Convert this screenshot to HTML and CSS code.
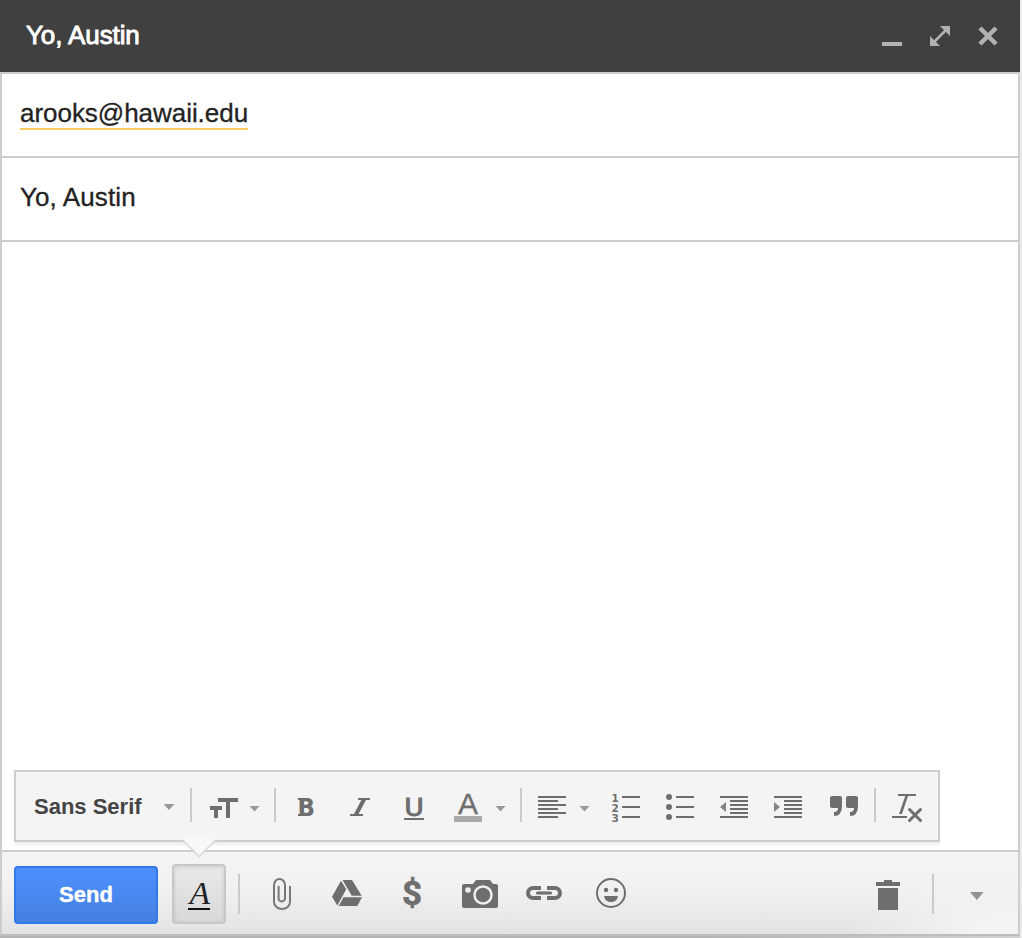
FILE: index.html
```html
<!DOCTYPE html>
<html lang="en">
<head>
<meta charset="utf-8">
<title>Yo, Austin</title>
<link rel="stylesheet" href="styles.css">
</head>
<body>
<main class="compose">
  <header class="titlebar">
    <h1 class="title">Yo, Austin</h1>
    <svg class="window-controls" width="106" height="24" viewBox="882 24 106 24" role="img" aria-label="Window controls">
      <rect x="882" y="42" width="20" height="4"/>
      <path d="M940 26h10v10zM930 36v10h10z"/>
      <path class="shaft" d="M933 43l14-14"/>
      <path class="close" d="M980 28l16 16M996 28l-16 16"/>
    </svg>
  </header>
  <section class="sheet">
    <div class="field"><span class="recipient">arooks@hawaii.edu</span></div>
    <div class="field subject">Yo, Austin</div>
    <div class="message">
      <div class="format-bar">
        <div class="font-picker">
          <span class="font-name">Sans Serif</span>
          <svg class="picker-caret" width="12" height="8" viewBox="0 0 12 8"><path class="light" d="M.5 1h11L6 7z"/></svg>
        </div>
        <i class="divider"></i>
        <svg width="82" height="36" viewBox="192 788 82 36"><rect x="218" y="798" width="20" height="4"/><rect x="226" y="798" width="4" height="20"/><rect x="210" y="806" width="12" height="4"/><rect x="214" y="806" width="4" height="12"/><path class="light" d="M249.500 806h10l-5 5.500z"/></svg>
        <i class="divider"></i>
        <svg width="57" height="36" viewBox="276 788 57 36"><text class="bold-glyph" x="297.500" y="816" textLength="17.500" lengthAdjust="spacingAndGlyphs">B</text><path d="M298 798h3v2h-3zM298 814h3v2h-3z"/></svg>
        <svg width="54" height="36" viewBox="333 788 54 36"><rect x="358" y="798" width="12" height="2"/><rect x="350" y="814" width="13" height="2"/><rect x="-2.300" y="0" width="4.600" height="17" transform="translate(364.500 798.500) skewX(-28)"/></svg>
        <svg width="54" height="36" viewBox="387 788 54 36"><text class="underline-glyph" x="404.200" y="815.500" textLength="19.600" lengthAdjust="spacingAndGlyphs">U</text><rect x="404" y="818" width="20" height="2"/></svg>
        <svg width="79" height="36" viewBox="441 788 79 36"><text class="color-glyph" x="458" y="814" textLength="20" lengthAdjust="spacingAndGlyphs">A</text><rect class="swatch" x="454" y="816" width="28" height="6"/><path class="light" d="M495.500 806h10l-5 5.500z"/></svg>
        <i class="divider"></i>
        <svg width="77" height="36" viewBox="522 788 77 36"><path class="rule" d="M538 797h28M538 801h20M538 805h28M538 809h20M538 813h28M538 817h20"/><path class="light" d="M579.500 806h10l-5 5.500z"/></svg>
        <svg width="54" height="36" viewBox="599 788 54 36"><g class="numerals"><text x="611.500" y="801.500">1</text><text x="611.500" y="811.500">2</text><text x="611.500" y="821.500">3</text></g><path class="rule" d="M622 797h18M622 807h18M622 817h18"/></svg>
        <svg width="54" height="36" viewBox="653 788 54 36"><circle cx="669" cy="797" r="3"/><circle cx="669" cy="807" r="3"/><circle cx="669" cy="817" r="3"/><path class="rule" d="M676 797h18M676 807h18M676 817h18"/></svg>
        <svg width="54" height="36" viewBox="707 788 54 36"><path class="rule" d="M720 797h28M730 801h18M730 805h18M730 809h18M730 813h18M720 817h28"/><path class="mid" d="M726 802v10l-6-5z"/></svg>
        <svg width="56" height="36" viewBox="761 788 56 36"><path class="rule" d="M774 797h28M784 801h18M784 805h18M784 809h18M784 813h18M774 817h28"/><path class="mid" d="M774 802v10l6-5z"/></svg>
        <svg width="57" height="36" viewBox="817 788 57 36"><path id="mark" d="M832 796h8q2 0 2 2v8q0 10-8 10v-4q4 0 4-4h-6q-2 0-2-2v-8q0-2 2-2z"/><use href="#mark" x="16"/></svg>
        <i class="divider"></i>
        <svg width="62" height="36" viewBox="876 788 62 36"><rect x="898" y="794" width="18" height="2"/><rect x="892" y="816" width="15" height="2"/><rect x="-1.400" y="0" width="2.800" height="19" transform="translate(907 795) skewX(-19)"/><path class="cross" d="M909.500 809.500l11 11M920.500 809.500l-11 11"/></svg>
        <svg class="pointer" width="38" height="22" viewBox="180 837 38 22"><path class="pointer-fill" d="M182 837.500h34v1.500L199 856l-17-17z"/><path class="pointer-edge" d="M182 839.500l17 17 17-17"/></svg>
      </div>
    </div>
    <footer class="actions">
      <button class="send">Send</button>
      <button class="format-toggle"><svg width="50" height="56" viewBox="174 866 50 56"><text class="italic-a" x="189.500" y="904" textLength="20.500" lengthAdjust="spacingAndGlyphs">A</text><rect class="ink" x="188" y="908" width="22" height="2"/></svg></button>
      <i class="divider tall"></i>
      <svg width="70" height="40" viewBox="240 874 70 40"><path class="clip" d="M290 886v16a8 7 0 0 1-16 0V885a5.500 6 0 0 1 11 0v13.500a3.200 3 0 0 1-6.400 0V886"/></svg>
      <svg width="70" height="40" viewBox="310 874 70 40"><path d="M341 880.700l5.300 8.600-9 16.200-5.300-8.800zM342.500 880h9.500l9.700 15.700h-10zM343.500 897.300H362l-4.700 8.700h-18.600z"/></svg>
      <svg width="60" height="40" viewBox="380 874 60 40"><text class="dollar" x="402" y="904.500" textLength="20" lengthAdjust="spacingAndGlyphs">$</text></svg>
      <svg width="74" height="40" viewBox="440 874 74 40"><path d="M464 884h9l3-4h14l3 4h3q2 0 2 2v20q0 2-2 2h-32q-2 0-2-2v-20q0-2 2-2z"/><circle class="hole" cx="468" cy="890" r="2.800"/><circle class="lens" cx="483" cy="895" r="8.500"/></svg>
      <svg width="64" height="40" viewBox="514 874 64 40"><path class="link" d="M541 888h-8a5 5 0 0 0 0 10h8M547 888h8a5 5 0 0 1 0 10h-8"/><rect x="536" y="891.500" width="16" height="3" rx="1.500"/></svg>
      <svg width="66" height="40" viewBox="578 874 66 40"><circle class="face" cx="611" cy="893" r="14"/><circle cx="606" cy="890" r="2.200"/><circle cx="616" cy="890" r="2.200"/><path d="M604 896h14q-1 6-7 6t-7-6z"/></svg>
      <svg class="trash" width="56" height="40" viewBox="876 874 56 40"><path d="M876 882h8v-2h8v2h8v4h-24zM878 888h20v22h-20z"/></svg>
      <i class="divider tall"></i>
      <svg width="84" height="40" viewBox="934 874 84 40"><path class="menu-caret" d="M970 892h13.500l-6.700 8z"/></svg>
    </footer>
  </section>
</main>
</body>
</html>
```
FILE: styles.css
```css
* { box-sizing: border-box; }
body {
  margin: 0;
  height: 938px;
  overflow: hidden;
  background: #ebebeb;
  font-family: "Liberation Sans", Arial, sans-serif;
  color: #222;
}
svg { display: block; flex: none; fill: #6e6e6e; }
.compose {
  display: flex;
  flex-direction: column;
  width: 1020px;
  height: 938px;
  background: linear-gradient(90deg, #b4b4b4 70%, #d2d2d2);
}
.titlebar {
  display: flex;
  justify-content: space-between;
  height: 72px;
  padding: 24px 22px 0 26px;
  background: #404040;
}
.title {
  margin: -4px 0 0;
  font-size: 26px;
  line-height: 30px;
  font-weight: 400;
  letter-spacing: -.1px;
  color: #fff;
  -webkit-text-stroke: .9px #fff;
}
.window-controls { overflow: visible; margin-right: 10px; fill: #b2b2b2; }
.close { stroke: #b2b2b2; stroke-width: 4.500; }
.shaft { stroke: #b2b2b2; stroke-width: 2.500; }
.sheet {
  display: flex;
  flex-direction: column;
  height: 864px;
  border: 2px solid #cdcdcd;
  border-bottom-color: #bdbdbd;
  background: #fff;
}
.field {
  height: 84px;
  padding: 24px 18px 0;
  border-bottom: 2px solid #cdcdcd;
  font-size: 26px;
  line-height: 30px;
  -webkit-text-stroke: .3px #222;
}
.subject { letter-spacing: .1px; }
.recipient {
  display: inline-block;
  height: 32px;
  border-bottom: 2px solid #fbcb5c;
  letter-spacing: -.04px;
}
.message {
  display: flex;
  flex: 1;
  align-items: flex-end;
  padding: 0 0 8px 12px;
}
.format-bar {
  position: relative;
  display: flex;
  align-items: center;
  width: 926px;
  height: 72px;
  border: 2px solid #cdcdcd;
  background: #f4f4f4;
  box-shadow: 0 3px 3px rgba(0, 0, 0, .07);
}
.font-picker {
  display: flex;
  align-items: center;
  justify-content: space-between;
  width: 174px;
  padding: 0 15px 0 18px;
  font-size: 22px;
  font-weight: 700;
  color: #444;
}
.font-name { padding-top: 2px; }
.picker-caret { margin-top: 2px; }
.divider {
  flex: none;
  width: 2px;
  height: 34px;
  margin-bottom: 2px;
  background: #cbcbcb;
}
.divider.tall { height: 40px; margin: 0; }
.light { fill: #999; }
.mid { fill: #858585; }
.swatch { fill: #aaa; }
.rule { fill: none; stroke: #6e6e6e; stroke-width: 2; }
.bold-glyph { font: 700 24.700px "DejaVu Sans", sans-serif; }
.underline-glyph { font: 400 24px "DejaVu Sans", sans-serif; stroke: #6e6e6e; stroke-width: 1; }
.color-glyph { font: 400 29px "Liberation Sans", sans-serif; stroke: #6e6e6e; stroke-width: .3; }
.numerals { font: 700 10.500px "DejaVu Sans", sans-serif; }
.cross { fill: none; stroke: #6e6e6e; stroke-width: 3; stroke-linecap: round; }
.pointer { position: absolute; left: 164px; top: 65px; }
.pointer-fill { fill: #f8f8f8; }
.pointer-edge { fill: none; stroke: #d8d8d8; stroke-width: 1.500; }
.actions {
  display: flex;
  align-items: center;
  height: 84px;
  padding: 2px 0 0 12px;
  border-top: 2px solid #cdcdcd;
  background:
    radial-gradient(ellipse 170px 75px at 100% 100%, #f3f3f3 25%, rgba(243, 243, 243, 0)),
    linear-gradient(#f4f4f4, #f1f1f1 45%, #e3e3e3);
}
.send {
  width: 144px;
  height: 58px;
  margin: 2px 14px 0 0;
  padding: 0;
  border: 2px solid #3079ed;
  border-radius: 4px;
  background: linear-gradient(#4d90fe, #4480e0);
  font: 700 22px "Liberation Sans", sans-serif;
  color: #fff;
  -webkit-text-stroke: .4px #fff;
}
.format-toggle {
  width: 54px;
  height: 60px;
  margin: 0 12px 0 0;
  padding: 0;
  border: 2px solid #c7c7c7;
  border-radius: 4px;
  background: linear-gradient(#e9e9e9, #d8d8d8);
  box-shadow: inset 0 1px 4px rgba(0, 0, 0, .12);
}
.italic-a { font: italic 400 31px "Liberation Serif", serif; fill: #222; }
.ink { fill: #111; }
.clip { fill: none; stroke: #777; stroke-width: 2; }
.dollar { font: 700 32.500px Roboto, sans-serif; stroke: #6e6e6e; stroke-width: .6; }
.hole { fill: #efefef; }
.lens { fill: #6e6e6e; stroke: #efefef; stroke-width: 2.500; }
.link { fill: none; stroke: #6e6e6e; stroke-width: 4; }
.face { fill: none; stroke: #6e6e6e; stroke-width: 2; }
.trash { margin-left: auto; }
.menu-caret { fill: #919191; }
```
